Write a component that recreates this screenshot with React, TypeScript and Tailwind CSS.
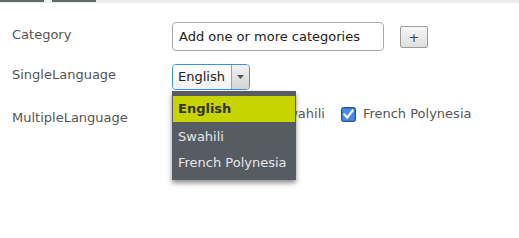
import { useState } from 'react';

const languages = ['English', 'Swahili', 'French Polynesia'];

function Checkbox({ checked }: { checked: boolean }) {
  return (
    <svg width="15" height="15" viewBox="0 0 15 15" className="shrink-0">
      {checked ? (
        <>
          <rect x="0.5" y="0.5" width="14" height="14" rx="2" fill="#2f6fc4" stroke="#1d4f96" />
          <rect x="1.5" y="1.5" width="12" height="12" rx="1" fill="#4a8ae0" />
          <path d="M3.5 7.5 L6.2 10.6 L11.6 3.6" fill="none" stroke="#fff" strokeWidth="2.2" strokeLinecap="square" />
        </>
      ) : (
        <rect x="0.5" y="0.5" width="14" height="14" rx="2" fill="#fff" stroke="#8a8a8a" />
      )}
    </svg>
  );
}

export default function App() {
  const [selected] = useState('English');
  const checked = ['English', 'Swahili', 'French Polynesia'];

  return (
    <div className="w-[519px] h-[238px] bg-white overflow-hidden text-[13px] text-[#555]" style={{ fontFamily: '"DejaVu Sans", Verdana, sans-serif' }}>
      {/* tab strip remnants */}
      <div className="flex h-[3px] bg-[#ececec]">
        <div className="w-[44px] h-[2px] bg-[#5f6a6a]" />
        <div className="w-[8px] h-[2px] bg-[#f4f4f4]" />
        <div className="w-[44px] h-[2px] bg-[#5f6a6a]" />
      </div>

      <div className="flex flex-col pt-[19px]">
        {/* Category */}
        <div className="flex items-start">
          <label className="w-[160px] ml-[12px] pt-[5px] leading-[16px]">Category</label>
          <div className="w-[212px] h-[29px] border border-[#a9a9a9] rounded-[4px] flex items-center pl-[6px] text-[#222] leading-[16px]">
            Add one or more categories
          </div>
          <button className="ml-[16px] mt-[4px] w-[28px] h-[22px] border border-[#9c9c9c] rounded-[2px] bg-gradient-to-b from-[#f7f7f7] to-[#dedede] flex items-center justify-center text-[#444] text-[13px] leading-none">
            +
          </button>
        </div>

        {/* SingleLanguage */}
        <div className="flex items-start mt-[13px]">
          <label className="w-[160px] ml-[12px] pt-[3px] leading-[16px]">SingleLanguage</label>
          <div className="relative">
            <div className="w-[78px] h-[26px] border border-[#3d8fe0] rounded-[4px] flex overflow-hidden">
              <div className="flex-1 flex items-center pl-[5px] text-[#222] bg-gradient-to-b from-white to-[#f2f2f2] leading-[16px]">
                {selected}
              </div>
              <div className="w-[18px] border-l border-[#a0a0a0] bg-gradient-to-b from-[#f2f2f2] to-[#d4d4d4] flex items-center justify-center">
                <svg width="7" height="4" viewBox="0 0 7 4">
                  <path d="M0 0 H7 L3.5 4 Z" fill="#555" />
                </svg>
              </div>
            </div>
            {/* open listbox */}
            <div className="absolute left-0 top-[27px] w-[124px] bg-[#575b62] pt-[5px] pb-[6px] shadow-[0_3px_5px_rgba(0,0,0,0.45)] z-10">
              {languages.map(l => (
                <div
                  key={l}
                  className={
                    l === selected
                      ? 'h-[26px] mx-[1px] flex items-center pl-[5px] bg-[#c8d400] text-[#333] font-bold leading-[16px]'
                      : 'h-[26px] mx-[1px] flex items-center pl-[5px] pt-[3px] text-[#e6e6e6] leading-[16px]'
                  }
                >
                  {l}
                </div>
              ))}
            </div>
          </div>
        </div>

        {/* MultipleLanguage */}
        <div className="flex items-start mt-[15px]">
          <label className="w-[160px] ml-[12px] pt-[5px] leading-[16px]">MultipleLanguage</label>
          <div className="flex items-center gap-[16px] pt-[1px]">
            {languages.map(l => (
              <span key={l} className="flex items-center gap-[7px] leading-[16px]">
                <Checkbox checked={checked.includes(l)} />
                <span>{l}</span>
              </span>
            ))}
          </div>
        </div>
      </div>
    </div>
  );
}
